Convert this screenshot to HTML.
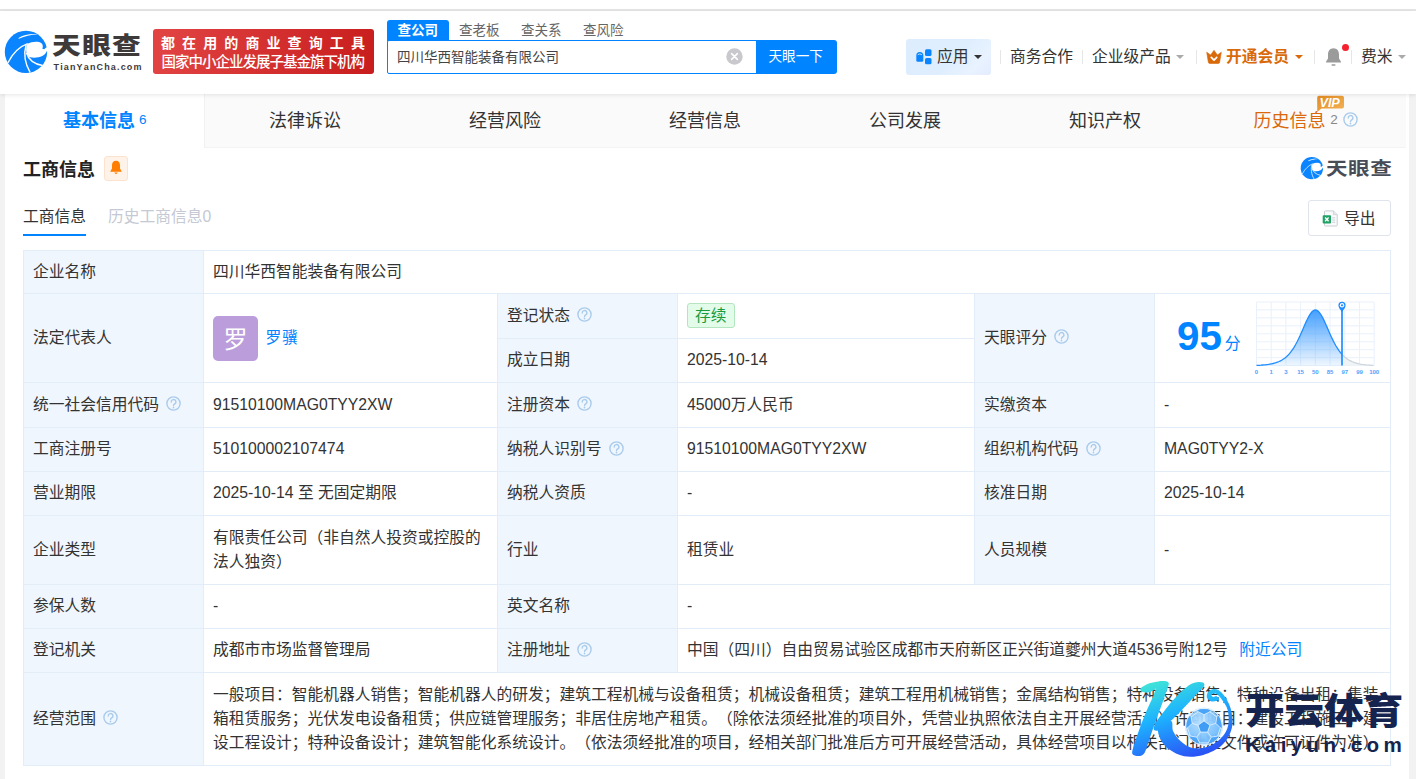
<!DOCTYPE html>
<html lang="zh-CN">
<head>
<meta charset="utf-8">
<title>四川华西智能装备有限公司 - 天眼查</title>
<style>
*{box-sizing:border-box;margin:0;padding:0}
html,body{width:1416px;height:779px;overflow:hidden;background:#f2f2f2}
body{position:relative;text-spacing-trim:space-all;font-kerning:none;font-family:"Liberation Sans","Noto Sans CJK SC",sans-serif;color:#333;font-size:15.75px}
.abs{position:absolute}
.t{position:absolute;white-space:nowrap;line-height:1}
/* header */
#topwhite{left:0;top:0;width:1416px;height:9px;background:#fff}
#topline{left:0;top:9px;width:1416px;height:2px;background:#e6e6e6}
#header{left:0;top:11px;width:1416px;height:83px;background:#fff;box-shadow:0 1px 4px rgba(0,0,0,.10);z-index:5}
.tri{width:0;height:0;border:4.1px solid transparent;border-top-width:4.6px;border-bottom-width:0}
.sep{top:50px;width:1px;height:14px;background:#e6e6e6}
/* nav */
#nav{left:5px;top:94px;width:1401px;height:54px;background:#fafafa;border-bottom:1.5px solid #f3f3f3}
#navact{left:5px;top:94px;width:200px;height:53.5px;background:#fff;border-right:1px solid #f1f1f1}
.nt{font-size:18px;top:111.5px;color:#333}
/* content */
#content{left:5px;top:94px;width:1404px;height:685px;background:#fff}
/* table */
.c{position:absolute;border:1px solid #e3edf8;display:flex;align-items:center;padding-left:9px;line-height:24.2px;background:#fff;color:#333}
.l{background:#f0f6fd}
.q{width:15px;height:15px;margin-left:7px;position:relative;top:-1.4px;flex:none;display:block}

.c span{white-space:nowrap}
.lk{color:#0084ff}
.av{display:inline-block;width:45px;height:45px;border-radius:5px;background:#bb9ddb;color:#fff;font-size:24px;line-height:47px;text-align:center;flex:none}
.bd{display:inline-block;height:25px;line-height:23px;padding:0 7px;border:1px solid #b4e5c1;background:#e3fbe9;color:#1a9b3f;border-radius:3px;font-size:15.75px}

.sc{font-size:40.3px;font-weight:bold;color:#0084ff;line-height:1;margin-left:13px;margin-top:-2px;font-family:"Liberation Sans",sans-serif}
.scf{font-size:15.75px;color:#0084ff;margin-left:3px;align-self:flex-end;margin-bottom:26px}
</style>
</head>
<body>
<svg width="0" height="0" style="position:absolute"><symbol id="qi" viewBox="0 0 15 15"><circle cx="7.5" cy="7.5" r="6.6" fill="none" stroke="#a9cbec" stroke-width="1.4"/><path d="M5.2 6A2.35 2.35 0 1 1 8.7 7.9C7.8 8.5 7.5 8.8 7.5 9.7" fill="none" stroke="#a9cbec" stroke-width="1.35" stroke-linecap="round"/><circle cx="7.5" cy="11.6" r=".85" fill="#a9cbec"/></symbol></svg>
<div class="abs" id="topwhite"></div>
<div class="abs" id="topline"></div>
<div class="abs" id="header"></div>

<!-- ===== header ===== -->
<div class="abs" id="hd" style="left:0;top:0;width:1416px;height:94px;z-index:6">
<svg class="abs" style="left:0;top:25px" width="60" height="55" viewBox="0 0 850 779">
<circle cx="368" cy="381" r="300" fill="#0a84ff"/>
<path d="M388 265 C450 236 540 224 588 258 C612 282 608 315 600 336 L628 343 L652 318 L700 312 L700 362 L666 365 C640 445 520 482 415 455 C392 430 376 400 372 380 C366 335 376 292 388 265Z" fill="#fff"/>
<path d="M260 198 C340 162 440 138 540 131 C440 120 340 134 268 180Z" fill="#fff"/>
<path d="M113 534 C180 400 290 300 392 264" fill="none" stroke="#fff" stroke-width="19"/>
<path d="M370 280 C335 400 350 540 428 676" fill="none" stroke="#fff" stroke-width="20"/>
<path d="M374 392 C400 480 480 550 602 574" fill="none" stroke="#fff" stroke-width="20"/>
</svg>
<div class="t" id="lg1" style="left:52px;top:34px;font-size:24px;font-weight:900;color:#3e3a39;letter-spacing:1px;transform-origin:0 0;transform:scaleX(1.2)">天眼查</div>
<div class="t" id="lg2" style="left:53.5px;top:62.5px;font-size:9px;font-weight:bold;color:#3e3a39;letter-spacing:1.15px">TianYanCha.com</div>
<div class="abs" style="left:153px;top:29px;width:221px;height:45px;border-radius:3px;background:linear-gradient(100deg,#e24444,#c81d1d)"></div>
<div class="t" id="bn1" style="left:161px;top:36px;font-size:14px;font-weight:bold;color:#fff;letter-spacing:7.1px">都在用的商业查询工具</div>
<div class="t" id="bn2" style="left:161.5px;top:55px;font-size:14.5px;font-weight:500;color:#fff;letter-spacing:-1px">国家中小企业发展子基金旗下机构</div>
<!-- search -->
<div class="abs" style="left:387px;top:20px;width:62px;height:21px;background:#0084ff;border-radius:3px 3px 0 0"></div>
<div class="t" id="st1" style="left:397.5px;top:23.5px;font-size:13.5px;font-weight:bold;color:#fff">查公司</div>
<div class="t" id="st2" style="left:459px;top:23.5px;font-size:13.5px;color:#666">查老板</div>
<div class="t" id="st3" style="left:521px;top:23.5px;font-size:13.5px;color:#666">查关系</div>
<div class="t" id="st4" style="left:583px;top:23.5px;font-size:13.5px;color:#666">查风险</div>
<div class="abs" style="left:387px;top:40px;width:372px;height:34px;border:1px solid #0084ff;border-radius:2px;background:#fff"></div>
<div class="t" id="sq" style="left:397px;top:51.3px;font-size:13.5px;color:#444">四川华西智能装备有限公司</div>
<svg class="abs" style="left:726px;top:48px" width="17" height="17" viewBox="0 0 17 17"><circle cx="8.5" cy="8.5" r="8.2" fill="#c9c9cd"/><path d="M5.6 5.6L11.4 11.4M11.4 5.6L5.6 11.4" stroke="#fff" stroke-width="1.5" stroke-linecap="round"/></svg>
<div class="abs" style="left:756px;top:40px;width:81px;height:34px;background:#0084ff;border-radius:0 3px 3px 0"></div>
<div class="t" id="sb" style="left:768.5px;top:50.2px;font-size:13.6px;color:#fff">天眼一下</div>
<!-- right menu -->
<div class="abs" style="left:906px;top:39px;width:85px;height:36px;background:linear-gradient(135deg,#ddedfe 0%,#deeefe 55%,#e9f2ff 80%,#e2ecfe 100%);border-radius:3px"></div>
<svg class="abs" style="left:916px;top:49px" width="17" height="16" viewBox="0 0 17 16"><path d="M.3 6.4A3.5 3.5 0 0 1 7.3 6.4V11.3Q7.3 12.8 5.8 12.8H1.8Q.3 12.8 .3 11.3Z" fill="#0a84ff"/><path d="M2 5.5Q3.8 3.9 5.6 5.5" fill="none" stroke="#d7ebff" stroke-width=".9" stroke-linecap="round"/><rect x="9" y=".3" width="6.5" height="6.8" rx="1.5" fill="#0a84ff"/><rect x="9" y="9" width="6.5" height="6.3" rx="1.5" fill="#0a84ff"/></svg>
<div class="t" id="m1" style="left:937px;top:49px;font-size:15.75px;color:#333">应用</div>
<div class="abs tri" style="left:974px;top:55px;border-top-color:#333"></div>
<div class="abs sep" style="left:1000px"></div>
<div class="t" id="m2" style="left:1010px;top:49px;font-size:15.75px;color:#333">商务合作</div>
<div class="abs sep" style="left:1082px"></div>
<div class="t" id="m3" style="left:1092px;top:49px;font-size:15.75px;color:#333">企业级产品</div>
<div class="abs tri" style="left:1176px;top:55px;border-top-color:#aaa"></div>
<div class="abs sep" style="left:1196px"></div>
<svg class="abs" style="left:1206px;top:49.5px" width="16" height="14" viewBox="0 0 16 14"><path d="M.7 2.2L4.6 5L8 .3L11.4 5L15.3 2.2L13.7 12Q13.5 13.5 12 13.5H4Q2.5 13.5 2.3 12Z" fill="#d96a0b" stroke="#d96a0b" stroke-width=".6" stroke-linejoin="round"/><path d="M5.3 7.4L8 10.1L10.7 7.4" fill="none" stroke="#fff" stroke-width="1.7" stroke-linecap="round" stroke-linejoin="round"/></svg>
<div class="t" id="m4" style="left:1226px;top:49px;font-size:15.75px;font-weight:bold;color:#d96a0b">开通会员</div>
<div class="abs tri" style="left:1295px;top:55px;border-top-color:#d96a0b"></div>
<div class="abs sep" style="left:1314px"></div>
<svg class="abs" style="left:1324px;top:47px" width="19" height="20" viewBox="0 0 19 20"><path d="M9.5 1.2C5.9 1.2 4 4 4 7.4V11.6L2 14.8V15.6H17V14.8L15 11.6V7.4C15 4 13.1 1.2 9.5 1.2Z" fill="#9b9b9b"/><rect x="7.4" y="17.2" width="4.2" height="1.6" rx=".8" fill="#9b9b9b"/></svg>
<div class="abs" style="left:1342px;top:43.7px;width:7px;height:7px;border-radius:50%;background:#f5222d"></div>
<div class="abs sep" style="left:1351px"></div>
<div class="t" id="m5" style="left:1361px;top:49px;font-size:15.75px;color:#333">费米</div>
<div class="abs tri" style="left:1398px;top:55px;border-top-color:#aaa"></div>
</div>
<div class="abs" id="content"></div>
<div class="abs" id="nav"></div>
<div class="abs" id="navact"></div>

<!-- ===== nav tabs ===== -->
<div class="t nt" id="n1" style="left:63px;color:#0084ff;font-weight:bold">基本信息</div>
<div class="t" id="n1c" style="left:139px;top:112.5px;font-size:13.5px;color:#0084ff">6</div>
<div class="t nt" id="n2" style="left:269px">法律诉讼</div>
<div class="t nt" id="n3" style="left:469px">经营风险</div>
<div class="t nt" id="n4" style="left:669px">经营信息</div>
<div class="t nt" id="n5" style="left:869px">公司发展</div>
<div class="t nt" id="n6" style="left:1069px">知识产权</div>
<div class="t nt" id="n7" style="left:1253.5px;color:#d9690b">历史信息</div>
<div class="t" id="n7c" style="left:1330.3px;top:112.5px;font-size:13.5px;color:#888">2</div>
<svg class="abs" style="left:1342.8px;top:112.2px" width="15" height="15"><use href="#qi"/></svg>
<svg class="abs" style="left:1316px;top:95px" width="30" height="18" viewBox="0 0 30 18"><defs><linearGradient id="vg" x1="0" y1="0" x2="1" y2="1"><stop offset="0" stop-color="#e38a1f"/><stop offset="1" stop-color="#f2b45a"/></linearGradient></defs><path d="M3 .8H26Q28 .8 28 2.8V11.6Q28 13.6 26 13.6H5.5L1.2 17V2.8Q1.2 .8 3 .8Z" fill="url(#vg)"/><text x="3.6" y="12" font-family="Liberation Sans,sans-serif" font-size="12.6" font-weight="bold" font-style="italic" fill="#fff" letter-spacing="-.1">VIP</text></svg>

<!-- ===== section head ===== -->
<div class="t" id="h1" style="left:23px;top:161px;font-size:18px;font-weight:bold;color:#222">工商信息</div>
<div class="abs" style="left:104px;top:156px;width:24px;height:25px;background:#fff2e8;border:1px solid #fde3cf;border-radius:3px"></div>
<svg class="abs" style="left:109px;top:160px" width="14" height="15" viewBox="0 0 14 15"><path d="M7 .8C4.4 .8 3 2.8 3 5.2V8.6L1.4 11.2V11.8H12.6V11.2L11 8.6V5.2C11 2.8 9.6 .8 7 .8Z" fill="#ff7d00"/><path d="M5.4 12.6H8.6Q8.4 14 7 14Q5.6 14 5.4 12.6Z" fill="#ff7d00"/></svg>
<div class="t" id="s1" style="left:23px;top:209.3px;font-size:15.75px;color:#333">工商信息</div>
<div class="abs" style="left:23px;top:233.5px;width:63px;height:2.6px;background:#0084ff"></div>
<div class="t" id="s2" style="left:108px;top:209.3px;font-size:15.75px;color:#c4c9d3">历史工商信息0</div>
<!-- small logo -->
<svg class="abs" style="left:1298px;top:153.8px" width="32" height="29" viewBox="0 0 850 779">
<circle cx="368" cy="381" r="300" fill="#0a84ff"/>
<path d="M388 265 C450 236 540 224 588 258 C612 282 608 315 600 336 L628 343 L652 318 L700 312 L700 362 L666 365 C640 445 520 482 415 455 C392 430 376 400 372 380 C366 335 376 292 388 265Z" fill="#fff"/>
<path d="M260 198 C340 162 440 138 540 131 C440 120 340 134 268 180Z" fill="#fff"/>
<path d="M113 534 C180 400 290 300 392 264" fill="none" stroke="#fff" stroke-width="19"/>
<path d="M370 280 C335 400 350 540 428 676" fill="none" stroke="#fff" stroke-width="20"/>
<path d="M374 392 C400 480 480 550 602 574" fill="none" stroke="#fff" stroke-width="20"/>
</svg>
<div class="t" id="lg3" style="left:1325.5px;top:159.5px;font-size:18px;font-weight:bold;color:#474c57;letter-spacing:.5px;transform-origin:0 0;transform:scaleX(1.195)">天眼查</div>
<!-- export -->
<div class="abs" style="left:1308px;top:200px;width:83px;height:36px;border:1px solid #dfe3ec;border-radius:3px;background:#fff"></div>
<svg class="abs" style="left:1322px;top:209.5px" width="17" height="17" viewBox="0 0 17 17"><path d="M3.3 .9H11.4L15.2 4.7V15.2Q15.2 16 14.4 16H3.3Q2.5 16 2.5 15.2V1.7Q2.5 .9 3.3 .9Z" fill="#fbfbfc" stroke="#c9cdd5" stroke-width="1"/><path d="M11.4 .9V4.7H15.2" fill="#e6e8ed" stroke="#c9cdd5" stroke-width=".8"/><rect x="10.2" y="7.3" width="3" height="1.1" fill="#cdd1d8"/><rect x="10.2" y="9.5" width="3" height="1.1" fill="#cdd1d8"/><rect x="10.2" y="11.7" width="3" height="1.1" fill="#cdd1d8"/><rect x=".7" y="5.2" width="8.3" height="8.3" rx=".8" fill="#21a366"/><path d="M3.1 7.5L6.6 11.2M6.6 7.5L3.1 11.2" stroke="#fff" stroke-width="1.4"/></svg>
<div class="t" id="ex" style="left:1344px;top:211px;font-size:15.75px;color:#333">导出</div>
<!-- ===== table ===== -->
<svg class="abs" id="chart" style="left:1250px;top:296px;z-index:2" width="136" height="84" viewBox="1250 296 136 84"><defs><linearGradient id="cg" x1="0" y1="0" x2="0" y2="1"><stop offset="0" stop-color="#3b9bff" stop-opacity=".95"/><stop offset="1" stop-color="#3b9bff" stop-opacity=".08"/></linearGradient><clipPath id="cl"><rect x="1250" y="296" width="92.0" height="84"/></clipPath><clipPath id="cr"><rect x="1342.0" y="296" width="60" height="84"/></clipPath></defs><path d="M1256.5 302.0V365.6M1271.2 302.0V365.6M1285.9 302.0V365.6M1300.6 302.0V365.6M1315.3 302.0V365.6M1330.1 302.0V365.6M1344.8 302.0V365.6M1359.5 302.0V365.6M1374.2 302.0V365.6M1256.5 302.0H1374.2M1256.5 309.9H1374.2M1256.5 317.9H1374.2M1256.5 325.9H1374.2M1256.5 333.8H1374.2M1256.5 341.8H1374.2M1256.5 349.7H1374.2M1256.5 357.7H1374.2M1256.5 365.6H1374.2" stroke="#e9f1fb" stroke-width="1" fill="none"/><g clip-path="url(#cl)"><path d="M1256.5 365.4 L1258.0 365.3 L1259.5 365.3 L1261.0 365.2 L1262.5 365.0 L1264.0 364.9 L1265.5 364.8 L1267.0 364.6 L1268.5 364.4 L1270.0 364.1 L1271.5 363.8 L1273.0 363.5 L1274.5 363.1 L1276.0 362.7 L1277.5 362.1 L1279.0 361.5 L1280.5 360.8 L1282.0 360.0 L1283.5 359.0 L1285.0 357.9 L1286.5 356.7 L1288.0 355.2 L1289.5 353.6 L1291.0 351.7 L1292.5 349.6 L1294.0 347.3 L1295.5 344.8 L1297.0 342.0 L1298.5 339.0 L1300.0 335.8 L1301.5 332.4 L1303.0 329.0 L1304.5 325.5 L1306.0 322.1 L1307.5 319.0 L1309.0 316.1 L1310.5 313.7 L1312.0 311.8 L1313.5 310.6 L1315.0 310.0 L1316.5 310.2 L1318.0 311.1 L1319.5 312.6 L1321.0 314.8 L1322.5 317.4 L1324.0 320.4 L1325.5 323.7 L1327.0 327.1 L1328.5 330.6 L1330.0 334.0 L1331.5 337.3 L1333.0 340.4 L1334.5 343.3 L1336.0 346.0 L1337.5 348.4 L1339.0 350.6 L1340.5 352.6 L1342.0 354.4 L1343.5 355.9 L1345.0 357.3 L1346.5 358.5 L1348.0 359.5 L1349.5 360.4 L1351.0 361.1 L1352.5 361.8 L1354.0 362.4 L1355.5 362.9 L1357.0 363.3 L1358.5 363.7 L1360.0 364.0 L1361.5 364.3 L1363.0 364.5 L1364.5 364.7 L1366.0 364.8 L1367.5 365.0 L1369.0 365.1 L1370.5 365.2 L1372.0 365.3 L1373.5 365.4 L1374.2 365.8 L1256.5 365.8Z" fill="url(#cg)"/><path d="M1256.5 365.4 L1258.0 365.3 L1259.5 365.3 L1261.0 365.2 L1262.5 365.0 L1264.0 364.9 L1265.5 364.8 L1267.0 364.6 L1268.5 364.4 L1270.0 364.1 L1271.5 363.8 L1273.0 363.5 L1274.5 363.1 L1276.0 362.7 L1277.5 362.1 L1279.0 361.5 L1280.5 360.8 L1282.0 360.0 L1283.5 359.0 L1285.0 357.9 L1286.5 356.7 L1288.0 355.2 L1289.5 353.6 L1291.0 351.7 L1292.5 349.6 L1294.0 347.3 L1295.5 344.8 L1297.0 342.0 L1298.5 339.0 L1300.0 335.8 L1301.5 332.4 L1303.0 329.0 L1304.5 325.5 L1306.0 322.1 L1307.5 319.0 L1309.0 316.1 L1310.5 313.7 L1312.0 311.8 L1313.5 310.6 L1315.0 310.0 L1316.5 310.2 L1318.0 311.1 L1319.5 312.6 L1321.0 314.8 L1322.5 317.4 L1324.0 320.4 L1325.5 323.7 L1327.0 327.1 L1328.5 330.6 L1330.0 334.0 L1331.5 337.3 L1333.0 340.4 L1334.5 343.3 L1336.0 346.0 L1337.5 348.4 L1339.0 350.6 L1340.5 352.6 L1342.0 354.4 L1343.5 355.9 L1345.0 357.3 L1346.5 358.5 L1348.0 359.5 L1349.5 360.4 L1351.0 361.1 L1352.5 361.8 L1354.0 362.4 L1355.5 362.9 L1357.0 363.3 L1358.5 363.7 L1360.0 364.0 L1361.5 364.3 L1363.0 364.5 L1364.5 364.7 L1366.0 364.8 L1367.5 365.0 L1369.0 365.1 L1370.5 365.2 L1372.0 365.3 L1373.5 365.4" fill="none" stroke="#1f8dff" stroke-width="1.3"/></g><g clip-path="url(#cr)"><path d="M1256.5 365.4 L1258.0 365.3 L1259.5 365.3 L1261.0 365.2 L1262.5 365.0 L1264.0 364.9 L1265.5 364.8 L1267.0 364.6 L1268.5 364.4 L1270.0 364.1 L1271.5 363.8 L1273.0 363.5 L1274.5 363.1 L1276.0 362.7 L1277.5 362.1 L1279.0 361.5 L1280.5 360.8 L1282.0 360.0 L1283.5 359.0 L1285.0 357.9 L1286.5 356.7 L1288.0 355.2 L1289.5 353.6 L1291.0 351.7 L1292.5 349.6 L1294.0 347.3 L1295.5 344.8 L1297.0 342.0 L1298.5 339.0 L1300.0 335.8 L1301.5 332.4 L1303.0 329.0 L1304.5 325.5 L1306.0 322.1 L1307.5 319.0 L1309.0 316.1 L1310.5 313.7 L1312.0 311.8 L1313.5 310.6 L1315.0 310.0 L1316.5 310.2 L1318.0 311.1 L1319.5 312.6 L1321.0 314.8 L1322.5 317.4 L1324.0 320.4 L1325.5 323.7 L1327.0 327.1 L1328.5 330.6 L1330.0 334.0 L1331.5 337.3 L1333.0 340.4 L1334.5 343.3 L1336.0 346.0 L1337.5 348.4 L1339.0 350.6 L1340.5 352.6 L1342.0 354.4 L1343.5 355.9 L1345.0 357.3 L1346.5 358.5 L1348.0 359.5 L1349.5 360.4 L1351.0 361.1 L1352.5 361.8 L1354.0 362.4 L1355.5 362.9 L1357.0 363.3 L1358.5 363.7 L1360.0 364.0 L1361.5 364.3 L1363.0 364.5 L1364.5 364.7 L1366.0 364.8 L1367.5 365.0 L1369.0 365.1 L1370.5 365.2 L1372.0 365.3 L1373.5 365.4 L1374.2 365.8 L1256.5 365.8Z" fill="#eef1f5" fill-opacity=".8"/><path d="M1256.5 365.4 L1258.0 365.3 L1259.5 365.3 L1261.0 365.2 L1262.5 365.0 L1264.0 364.9 L1265.5 364.8 L1267.0 364.6 L1268.5 364.4 L1270.0 364.1 L1271.5 363.8 L1273.0 363.5 L1274.5 363.1 L1276.0 362.7 L1277.5 362.1 L1279.0 361.5 L1280.5 360.8 L1282.0 360.0 L1283.5 359.0 L1285.0 357.9 L1286.5 356.7 L1288.0 355.2 L1289.5 353.6 L1291.0 351.7 L1292.5 349.6 L1294.0 347.3 L1295.5 344.8 L1297.0 342.0 L1298.5 339.0 L1300.0 335.8 L1301.5 332.4 L1303.0 329.0 L1304.5 325.5 L1306.0 322.1 L1307.5 319.0 L1309.0 316.1 L1310.5 313.7 L1312.0 311.8 L1313.5 310.6 L1315.0 310.0 L1316.5 310.2 L1318.0 311.1 L1319.5 312.6 L1321.0 314.8 L1322.5 317.4 L1324.0 320.4 L1325.5 323.7 L1327.0 327.1 L1328.5 330.6 L1330.0 334.0 L1331.5 337.3 L1333.0 340.4 L1334.5 343.3 L1336.0 346.0 L1337.5 348.4 L1339.0 350.6 L1340.5 352.6 L1342.0 354.4 L1343.5 355.9 L1345.0 357.3 L1346.5 358.5 L1348.0 359.5 L1349.5 360.4 L1351.0 361.1 L1352.5 361.8 L1354.0 362.4 L1355.5 362.9 L1357.0 363.3 L1358.5 363.7 L1360.0 364.0 L1361.5 364.3 L1363.0 364.5 L1364.5 364.7 L1366.0 364.8 L1367.5 365.0 L1369.0 365.1 L1370.5 365.2 L1372.0 365.3 L1373.5 365.4" fill="none" stroke="#cbd3dd" stroke-width="1.2"/></g><path d="M1342 307V365.6" stroke="#1f8dff" stroke-width="1.7"/><path d="M1342 312.2C1340.4 309.6 1338.4 307.8 1338.4 305.3A3.6 3.6 0 0 1 1345.6 305.3C1345.6 307.8 1343.6 309.6 1342 312.2Z" fill="#1f8dff"/><circle cx="1342" cy="305.3" r="2.2" fill="#fff"/><circle cx="1342" cy="305.3" r="1.1" fill="#1f8dff"/><text x="1256.5" y="373.8" text-anchor="middle" font-family="Liberation Sans,sans-serif" font-size="6" font-weight="bold" fill="#4aa3ff">0</text><text x="1271.2" y="373.8" text-anchor="middle" font-family="Liberation Sans,sans-serif" font-size="6" font-weight="bold" fill="#4aa3ff">1</text><text x="1285.9" y="373.8" text-anchor="middle" font-family="Liberation Sans,sans-serif" font-size="6" font-weight="bold" fill="#4aa3ff">3</text><text x="1300.6" y="373.8" text-anchor="middle" font-family="Liberation Sans,sans-serif" font-size="6" font-weight="bold" fill="#4aa3ff">15</text><text x="1315.3" y="373.8" text-anchor="middle" font-family="Liberation Sans,sans-serif" font-size="6" font-weight="bold" fill="#4aa3ff">50</text><text x="1330.1" y="373.8" text-anchor="middle" font-family="Liberation Sans,sans-serif" font-size="6" font-weight="bold" fill="#4aa3ff">85</text><text x="1344.8" y="373.8" text-anchor="middle" font-family="Liberation Sans,sans-serif" font-size="6" font-weight="bold" fill="#4aa3ff">97</text><text x="1359.5" y="373.8" text-anchor="middle" font-family="Liberation Sans,sans-serif" font-size="6" font-weight="bold" fill="#4aa3ff">99</text><text x="1374.2" y="373.8" text-anchor="middle" font-family="Liberation Sans,sans-serif" font-size="6" font-weight="bold" fill="#4aa3ff">100</text></svg>

<div class="c l" style="left:23px;top:250px;width:181px;height:44px;"><span>企业名称</span></div>
<div class="c" style="left:203px;top:250px;width:1188px;height:44px;"><span>四川华西智能装备有限公司</span></div>
<div class="c l" style="left:23px;top:293px;width:181px;height:90px;"><span>法定代表人</span></div>
<div class="c" style="left:203px;top:293px;width:295px;height:90px;"><span class="av">罗</span><span class="lk" style="margin-left:7.5px;letter-spacing:.8px">罗骥</span></div>
<div class="c l" style="left:497px;top:293px;width:181px;height:46px;"><span>登记状态</span><svg class="q"><use href="#qi"/></svg></div>
<div class="c" style="left:677px;top:293px;width:298px;height:46px;"><span class="bd" style="position:relative;top:-1px">存续</span></div>
<div class="c l" style="left:497px;top:338px;width:181px;height:45px;"><span>成立日期</span></div>
<div class="c" style="left:677px;top:338px;width:298px;height:45px;"><span>2025-10-14</span></div>
<div class="c l" style="left:974px;top:293px;width:181px;height:90px;"><span>天眼评分</span><svg class="q"><use href="#qi"/></svg></div>
<div class="c" style="left:1154px;top:293px;width:237px;height:90px;"><span class="sc">95</span><span class="scf">分</span></div>
<div class="c l" style="left:23px;top:382px;width:181px;height:46px;"><span>统一社会信用代码</span><svg class="q"><use href="#qi"/></svg></div>
<div class="c" style="left:203px;top:382px;width:295px;height:46px;"><span>91510100MAG0TYY2XW</span></div>
<div class="c l" style="left:497px;top:382px;width:181px;height:46px;"><span>注册资本</span><svg class="q"><use href="#qi"/></svg></div>
<div class="c" style="left:677px;top:382px;width:298px;height:46px;"><span>45000万人民币</span></div>
<div class="c l" style="left:974px;top:382px;width:181px;height:46px;"><span>实缴资本</span></div>
<div class="c" style="left:1154px;top:382px;width:237px;height:46px;"><span>-</span></div>
<div class="c l" style="left:23px;top:427px;width:181px;height:45px;"><span>工商注册号</span></div>
<div class="c" style="left:203px;top:427px;width:295px;height:45px;"><span>510100002107474</span></div>
<div class="c l" style="left:497px;top:427px;width:181px;height:45px;"><span>纳税人识别号</span><svg class="q"><use href="#qi"/></svg></div>
<div class="c" style="left:677px;top:427px;width:298px;height:45px;"><span>91510100MAG0TYY2XW</span></div>
<div class="c l" style="left:974px;top:427px;width:181px;height:45px;"><span>组织机构代码</span><svg class="q"><use href="#qi"/></svg></div>
<div class="c" style="left:1154px;top:427px;width:237px;height:45px;"><span>MAG0TYY2-X</span></div>
<div class="c l" style="left:23px;top:471px;width:181px;height:45px;"><span>营业期限</span></div>
<div class="c" style="left:203px;top:471px;width:295px;height:45px;"><span>2025-10-14 至 无固定期限</span></div>
<div class="c l" style="left:497px;top:471px;width:181px;height:45px;"><span>纳税人资质</span></div>
<div class="c" style="left:677px;top:471px;width:298px;height:45px;"><span>-</span></div>
<div class="c l" style="left:974px;top:471px;width:181px;height:45px;"><span>核准日期</span></div>
<div class="c" style="left:1154px;top:471px;width:237px;height:45px;"><span>2025-10-14</span></div>
<div class="c l" style="left:23px;top:515px;width:181px;height:70px;"><span>企业类型</span></div>
<div class="c" style="left:203px;top:515px;width:295px;height:70px;"><span>有限责任公司（非自然人投资或控股的<br>法人独资）</span></div>
<div class="c l" style="left:497px;top:515px;width:181px;height:70px;"><span>行业</span></div>
<div class="c" style="left:677px;top:515px;width:298px;height:70px;"><span>租赁业</span></div>
<div class="c l" style="left:974px;top:515px;width:181px;height:70px;"><span>人员规模</span></div>
<div class="c" style="left:1154px;top:515px;width:237px;height:70px;"><span>-</span></div>
<div class="c l" style="left:23px;top:584px;width:181px;height:45px;"><span>参保人数</span></div>
<div class="c" style="left:203px;top:584px;width:295px;height:45px;"><span>-</span></div>
<div class="c l" style="left:497px;top:584px;width:181px;height:45px;"><span>英文名称</span></div>
<div class="c" style="left:677px;top:584px;width:714px;height:45px;"><span>-</span></div>
<div class="c l" style="left:23px;top:628px;width:181px;height:45px;"><span>登记机关</span></div>
<div class="c" style="left:203px;top:628px;width:295px;height:45px;"><span>成都市市场监督管理局</span></div>
<div class="c l" style="left:497px;top:628px;width:181px;height:45px;"><span>注册地址</span><svg class="q"><use href="#qi"/></svg></div>
<div class="c" style="left:677px;top:628px;width:714px;height:45px;"><span>中国（四川）自由贸易试验区成都市天府新区正兴街道夔州大道4536号附12号</span><span class="lk" style="margin-left:11.5px">附近公司</span></div>
<div class="c l" style="left:23px;top:672px;width:181px;height:94px;"><span>经营范围</span><svg class="q"><use href="#qi"/></svg></div>
<div class="c" style="left:203px;top:672px;width:1188px;height:94px;"><span>一般项目：智能机器人销售；智能机器人的研发；建筑工程机械与设备租赁；机械设备租赁；建筑工程用机械销售；金属结构销售；特种设备销售；特种设备出租；集装<br>箱租赁服务；光伏发电设备租赁；供应链管理服务；非居住房地产租赁。（除依法须经批准的项目外，凭营业执照依法自主开展经营活动）许可项目：建设工程施工；建<br>设工程设计；特种设备设计；建筑智能化系统设计。（依法须经批准的项目，经相关部门批准后方可开展经营活动，具体经营项目以相关部门批准文件或许可证件为准）</span></div>

<!--WM--><svg class="abs" id="wmk" style="left:1125px;top:675px;z-index:9" width="115" height="90" viewBox="1125 675 115 90">
<defs><linearGradient id="kg" gradientUnits="userSpaceOnUse" x1="1160" y1="680" x2="1185" y2="758"><stop offset="0" stop-color="#3fe3d8"/><stop offset=".45" stop-color="#1db2ff"/><stop offset="1" stop-color="#2a55f6"/></linearGradient>
<radialGradient id="bg2" cx=".4" cy=".35" r=".8"><stop offset="0" stop-color="#b6e0ff"/><stop offset="1" stop-color="#58aefc"/></radialGradient>
<clipPath id="bc"><circle cx="1204.0" cy="726.6" r="17.7"/></clipPath></defs>
<path d="M1158.0 729.3C1157.5 732.0 1159.0 736.6 1160.8 740.0C1162.7 743.3 1165.1 746.6 1169.0 749.3C1172.9 752.0 1178.5 755.3 1184.2 756.3C1189.9 757.2 1197.1 756.8 1203.4 755.0C1209.8 753.1 1217.3 749.6 1222.1 745.1C1226.8 740.6 1230.5 733.9 1231.9 727.8C1233.4 721.7 1232.1 714.1 1230.7 708.5C1229.2 702.9 1225.9 697.6 1223.3 694.4C1220.8 691.1 1217.7 689.5 1215.3 689.0C1212.8 688.5 1210.2 689.8 1208.8 691.2C1207.4 692.6 1206.3 695.5 1206.8 697.2C1207.3 698.9 1209.7 701.0 1211.8 701.5C1213.8 701.9 1218.3 700.7 1219.1 699.8C1219.9 698.9 1217.5 696.7 1216.5 696.2C1215.6 695.7 1214.3 697.1 1213.5 697.0C1212.6 696.8 1211.4 695.9 1211.4 695.3C1211.4 694.7 1212.5 693.7 1213.3 693.5C1214.2 693.3 1215.2 693.2 1216.5 694.1C1217.9 695.1 1219.6 696.4 1221.4 699.0C1223.3 701.6 1226.4 705.4 1227.6 709.8C1228.7 714.2 1229.2 720.5 1228.2 725.2C1227.2 729.9 1224.9 734.2 1221.4 737.8C1218.0 741.4 1212.4 745.1 1207.5 746.8C1202.7 748.5 1197.0 748.9 1192.5 748.0C1188.1 747.2 1184.2 744.4 1181.0 741.6C1177.8 738.9 1174.8 735.0 1173.3 731.6C1171.7 728.2 1173.2 722.6 1171.6 721.3C1170.0 720.1 1165.9 722.6 1163.6 723.9C1161.4 725.2 1158.5 726.6 1158.0 729.3Z" fill="url(#kg)"/>
<path d="M1159.2 681.8C1160.6 680.8 1163.3 680.8 1164.9 681.0C1166.5 681.3 1168.6 681.6 1168.8 683.4C1169.0 685.1 1167.3 688.5 1166.2 691.8C1165.1 695.1 1163.6 699.5 1162.4 703.1C1161.1 706.8 1159.8 710.2 1158.5 713.6C1157.2 717.1 1155.9 720.5 1154.7 723.9C1153.4 727.3 1152.2 730.8 1151.1 734.2C1149.9 737.6 1148.8 741.5 1147.7 744.5C1146.7 747.4 1145.9 750.3 1144.9 752.2C1143.9 754.0 1142.9 754.9 1141.6 755.5C1140.2 756.1 1138.2 756.2 1136.7 755.9C1135.1 755.6 1132.9 755.2 1132.3 753.7C1131.8 752.2 1132.6 749.8 1133.4 747.0C1134.1 744.2 1135.4 740.6 1136.7 736.8C1138.0 732.9 1139.8 728.0 1141.3 723.9C1142.8 719.9 1144.4 716.0 1145.9 712.4C1147.5 708.7 1149.2 705.1 1150.6 702.1C1151.9 699.1 1152.9 696.9 1153.9 694.4C1154.9 691.9 1155.6 689.4 1156.5 687.3C1157.3 685.2 1157.7 682.9 1159.2 681.8Z" fill="url(#kg)"/>
<path d="M1158.5 681.4C1161.0 681.1 1163.5 680.8 1164.3 681.6C1165.0 682.3 1164.1 684.7 1163.0 685.7C1161.9 686.6 1159.4 686.5 1157.5 687.5C1155.6 688.4 1153.3 690.7 1151.5 691.6C1149.6 692.4 1147.9 692.6 1146.3 692.6C1144.8 692.6 1143.1 692.3 1142.1 691.8C1141.1 691.3 1140.1 690.3 1140.2 689.5C1140.2 688.7 1140.9 687.9 1142.5 686.8C1144.0 685.8 1146.9 684.1 1149.5 683.2C1152.2 682.3 1156.1 681.7 1158.5 681.4Z" fill="url(#kg)"/>
<path d="M1156.6 721.3C1158.7 717.9 1162.7 712.9 1166.2 708.5C1169.7 704.1 1173.9 698.9 1177.8 695.0C1181.6 691.1 1186.1 687.3 1189.3 685.1C1192.5 683.0 1194.8 682.6 1197.0 682.2C1199.3 681.8 1201.6 681.9 1202.8 682.6C1204.0 683.2 1205.0 684.2 1204.1 686.0C1203.1 687.9 1199.9 690.6 1197.0 693.7C1194.1 696.9 1190.2 701.0 1186.8 704.7C1183.3 708.3 1179.5 712.6 1176.5 715.6C1173.5 718.6 1171.8 720.2 1168.8 722.6C1165.8 725.1 1161.0 729.3 1158.5 730.3C1156.0 731.4 1154.0 730.5 1153.6 729.1C1153.3 727.6 1154.5 724.8 1156.6 721.3Z" fill="url(#kg)"/>
<circle cx="1204.0" cy="726.6" r="18.9" fill="#7cc0ff" fill-opacity=".55"/>
<circle cx="1204.0" cy="726.6" r="18.299999999999997" fill="none" stroke="#e8f5ff" stroke-width=".9"/>
<circle cx="1204.0" cy="726.6" r="17.299999999999997" fill="url(#bg2)" fill-opacity=".9"/>
<g clip-path="url(#bc)"><path d="M1204.0 714.7L1198.2 711.8L1194.7 707.9L1213.3 707.9L1209.8 711.8ZM1215.8 723.3L1216.8 716.9L1218.9 712.0L1224.7 729.6L1220.4 727.9ZM1211.3 737.1L1217.7 736.1L1222.5 736.3L1207.5 747.2L1208.3 742.9ZM1196.7 737.1L1199.7 742.9L1200.5 747.2L1185.5 736.3L1190.3 736.1ZM1192.2 723.3L1187.6 727.9L1183.3 729.6L1189.1 712.0L1191.2 716.9Z" fill="#4aa4f8"/><path d="M1204.0 720.9 L1209.9 725.2 L1207.6 732.1 L1200.4 732.1 L1198.1 725.2Z" fill="#3f9df6"/><path d="M1204.0 720.9L1204.0 714.7M1209.8 711.8L1216.8 716.9M1209.9 725.2L1215.8 723.3M1220.4 727.9L1217.7 736.1M1207.6 732.1L1211.3 737.1M1208.3 742.9L1199.7 742.9M1200.4 732.1L1196.7 737.1M1190.3 736.1L1187.6 727.9M1198.1 725.2L1192.2 723.3M1191.2 716.9L1198.2 711.8M1204.0 720.9 L1209.9 725.2 L1207.6 732.1 L1200.4 732.1 L1198.1 725.2ZM1204.0 714.7L1198.2 711.8L1194.7 707.9L1213.3 707.9L1209.8 711.8ZM1215.8 723.3L1216.8 716.9L1218.9 712.0L1224.7 729.6L1220.4 727.9ZM1211.3 737.1L1217.7 736.1L1222.5 736.3L1207.5 747.2L1208.3 742.9ZM1196.7 737.1L1199.7 742.9L1200.5 747.2L1185.5 736.3L1190.3 736.1ZM1192.2 723.3L1187.6 727.9L1183.3 729.6L1189.1 712.0L1191.2 716.9Z" fill="none" stroke="#eaf6ff" stroke-width=".8"/></g>
</svg>
<div class="t" id="wm1" style="left:1244.6px;top:693.5px;font-size:36px;font-weight:900;color:#14244f;z-index:9;letter-spacing:0;transform-origin:0 0;transform:scaleX(1.1)">开云体育</div>
<div class="t" id="wm2" style="left:1245.5px;top:735.3px;font-size:20.6px;font-weight:bold;color:#14244f;z-index:9;letter-spacing:4.4px;font-family:'Liberation Sans',sans-serif">Kaiyun.com</div><!--/WM-->
</body>
</html>
